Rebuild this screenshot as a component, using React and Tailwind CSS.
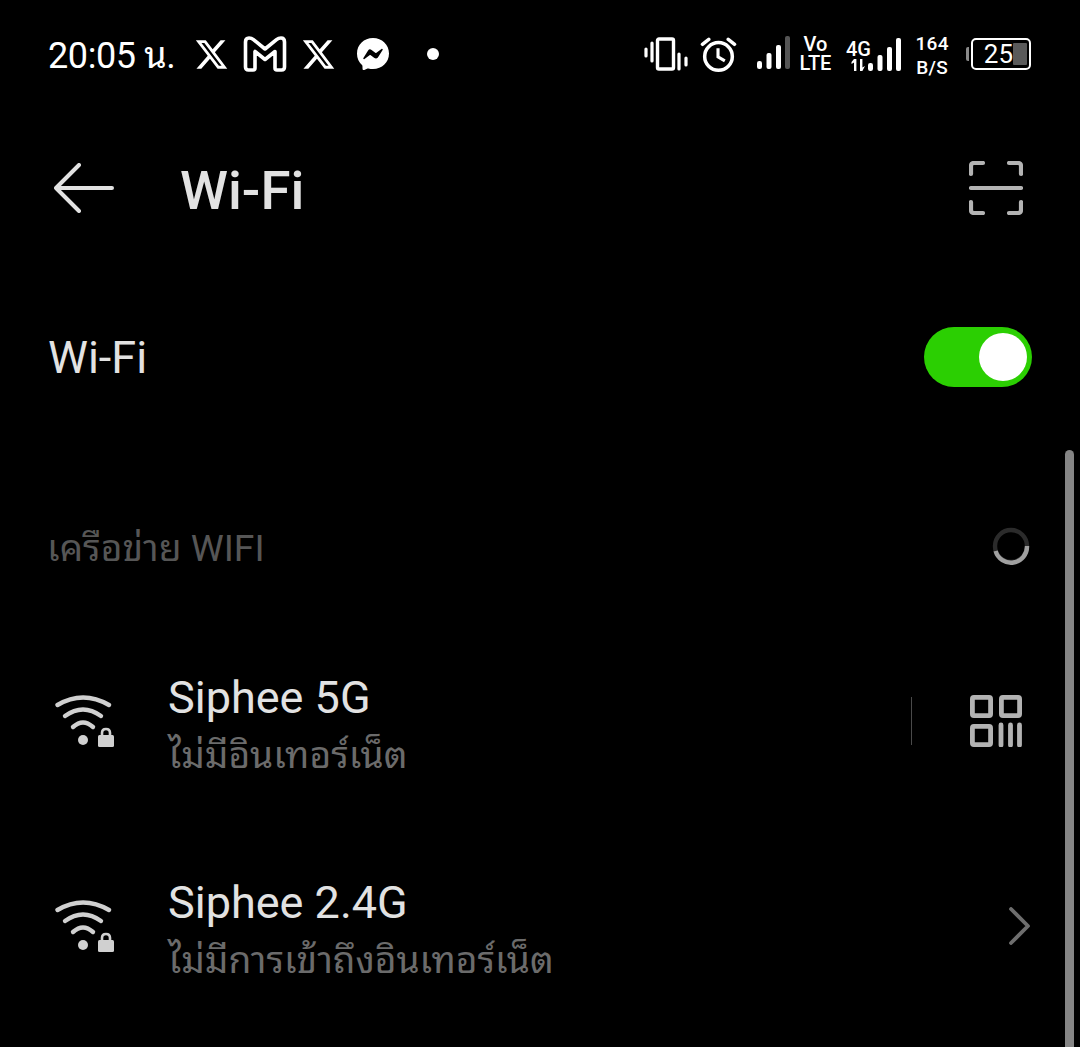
import React from "react";
import { SiMessenger } from "react-icons/si";

const sans = "font-['Roboto','Noto_Sans_Thai_Looped','Noto_Serif_Thai','Loma','Garuda','Noto_Sans_Thai','Noto_Sans','DejaVu_Sans',sans-serif]";

const XLogo = ({ className }) => (
  <svg viewBox="0 0 24 24" className={className} fill="currentColor">
    <path d="M18.244 2.25h3.308l-7.227 8.26 8.502 11.24H16.17l-5.214-6.817L4.99 21.75H1.68l7.73-8.835L1.254 2.25H8.08l4.713 6.231zm-1.161 17.52h1.833L7.084 4.126H5.117z" />
  </svg>
);

const MailMark = () => (
  <svg viewBox="0 0 46 36" className="w-[46px] h-[36px]" fill="none" stroke="white" strokeWidth="3.6" strokeLinejoin="round">
    <path d="M3.5 6 Q3.5 2 7 2 Q9.5 2 11.5 3.6 L23 13 L34.5 3.6 Q36.5 2 39 2 Q42.5 2 42.5 6 V31 Q42.5 34 39.5 34 H35 Q33 34 33 32 V15.5 L23 23.5 L13 15.5 V32 Q13 34 11 34 H6.5 Q3.5 34 3.5 31 Z" />
  </svg>
);

const VibrateIcon = () => (
  <svg viewBox="0 0 44 34" className="w-[44px] h-[34px]" fill="none" stroke="white">
    <rect x="13.5" y="2" width="16" height="30" rx="1.5" strokeWidth="3.4" />
    <path d="M2 12v7M8 6v18M35 17v15M42 21v7" strokeWidth="3.2" strokeLinecap="round" />
  </svg>
);

const AlarmIcon = () => (
  <svg viewBox="0 0 38 38" className="w-[37px] h-[37px]" fill="none" stroke="white" strokeWidth="3.6" strokeLinecap="round">
    <circle cx="19" cy="21" r="14.2" />
    <path d="M18.5 12.5v9l7 4" strokeWidth="3.2" strokeLinecap="butt" />
    <path d="M2.5 8.5 9 3.5M29 3.5l6.5 5" />
  </svg>
);

const SignalBars = ({ lastDim }) => (
  <svg viewBox="0 0 33 33" className="w-[33px] h-[33px]">
    <rect x="0" y="25" width="5" height="8" rx="2.2" fill="white" />
    <rect x="9.5" y="17" width="5" height="16" rx="2" fill="white" />
    <rect x="19" y="9" width="5" height="24" rx="2" fill="white" />
    <rect x="28" y="0" width="5" height="33" rx="2" fill={lastDim ? "#555555" : "white"} />
  </svg>
);

const ArrowsMini = () => (
  <svg viewBox="0 0 16 12" className="w-[16px] h-[12px]" fill="white">
    <path d="M4 0h2.4v12H4V3.5L1.5 5V3zM10 0h2.4v8.5L15 7 12.4 12H10z" />
  </svg>
);

const ScanIcon = () => (
  <svg viewBox="0 0 54 54" className="w-[54px] h-[54px]" fill="none" stroke="#b3b3b3" strokeWidth="4.2" strokeLinecap="round" strokeLinejoin="round">
    <path d="M2 13V5q0-3 3-3h9M40 2h9q3 0 3 3v8M2 41v8q0 3 3 3h9M40 52h9q3 0 3-3v-8" />
    <path d="M2 27h50" />
  </svg>
);

const QrIcon = () => (
  <svg viewBox="0 0 52 52" className="w-[52px] h-[52px]" fill="none" stroke="#b3b3b3" strokeWidth="4.8">
    <rect x="2.4" y="2.4" width="18.2" height="18.2" rx="1.5" />
    <rect x="31.4" y="2.4" width="18.2" height="18.2" rx="1.5" />
    <rect x="2.4" y="31.4" width="18.2" height="18.2" rx="1.5" />
    <path d="M31 30v20M40.5 30v20M49.5 30v20" strokeLinecap="round" />
  </svg>
);

const WifiLock = () => (
  <svg viewBox="0 0 60 56" className="w-[60px] h-[56px]" fill="none" stroke="#d0d0d0" strokeWidth="4.4" strokeLinecap="round">
    <path d="M2.5 12Q28-3 54 12" />
    <path d="M10 23Q28 10 46 23" />
    <path d="M18 34Q28 25 38 34" />
    <circle cx="28" cy="47" r="5" fill="#d0d0d0" stroke="none" />
    <path d="M48 42v-3q0-4 4-4t4 4v3" strokeWidth="2.6" stroke="#d0d0d0" transform="translate(-1 1)" />
    <rect x="43" y="42" width="16" height="12" rx="1.5" fill="#d0d0d0" stroke="none" />
  </svg>
);

const Spinner = () => (
  <svg viewBox="0 0 38 38" className="w-[38px] h-[38px]" fill="none" strokeWidth="4.4">
    <circle cx="19" cy="19" r="16" stroke="#2b2b2b" />
    <path d="M3.6 24A16 16 0 0 0 35 19" stroke="#a0a0a0" />
  </svg>
);

const Chevron = () => (
  <svg viewBox="0 0 24 38" className="w-[24px] h-[38px]" fill="none" stroke="#6e6e6e" strokeWidth="3.8" strokeLinecap="round" strokeLinejoin="round">
    <path d="M3 2l17 17L3 36" />
  </svg>
);

function NetworkRow({ name, status, action }) {
  return (
    <div className="h-[205px] flex items-center pt-[4px] pl-[55px] pr-[48px]">
      <WifiLock />
      <div className="ml-[53px] flex-1 pt-[12px]">
        <div className="text-[45px] leading-[56px] text-[#e2e2e2]">{name}</div>
        <div className="text-[37.2px] leading-[58px] text-[#6b6b6b]">{status}</div>
      </div>
      {action}
    </div>
  );
}

export default function App() {
  return (
    <div className={`relative h-[1047px] w-[1080px] overflow-hidden bg-black ${sans}`}>
      {/* status bar */}
      <div className="h-[108px] flex items-center pl-[48px] pr-[49px] text-white">
        <span className="text-[36px] leading-none tracking-[-0.4px] mt-[3px]">20:05 <span className="text-[36px]">น.</span></span>
        <XLogo className="w-[35px] h-[35px] ml-[19px]" />
        <span className="ml-[13px]"><MailMark /></span>
        <XLogo className="w-[35px] h-[35px] ml-[13px]" />
        <SiMessenger className="w-[32px] h-[32px] ml-[21px]" />
        <span className="w-[12px] h-[12px] rounded-full bg-white ml-[38px]" />
        <div className="flex-1" />
        <VibrateIcon />
        <span className="ml-[12px]"><AlarmIcon /></span>
        <span className="ml-[20px] mt-[-3px]"><SignalBars lastDim /></span>
        <div className="ml-[10px] flex flex-col items-center text-[20px] leading-[19px] font-medium">
          <span>Vo</span>
          <span>LTE</span>
        </div>
        <div className="ml-[14px] flex items-end">
          <div className="flex flex-col items-center w-[26px] -mr-[3px]">
            <span className="text-[20px] leading-[20px] font-medium">4G</span>
            <ArrowsMini />
          </div>
          <SignalBars />
        </div>
        <div className="ml-[14px] mt-[3px] flex flex-col items-center text-[19px] leading-[24px] font-medium tracking-[0.4px]">
          <span>164</span>
          <span>B/S</span>
        </div>
        <div className="ml-[17px] flex items-center">
          <span className="w-[3px] h-[14px] rounded-l-[2px] bg-[#8a8a8a] mr-[2px]" />
          <div className="w-[60px] h-[32px] rounded-[5px] border-[2px] border-white flex items-center justify-end relative pr-[2px]">
            <span className="text-[26px] leading-none mr-[14px]">25</span>
            <span className="absolute right-[2px] top-[3px] w-[14px] h-[22px] rounded-[1px] bg-[#5a5a5a]" />
          </div>
        </div>
      </div>

      {/* title bar */}
      <div className="h-[160px] flex items-center pl-[54px] pr-[57px]">
        <svg viewBox="0 0 60 50" className="w-[60px] h-[50px]" fill="none" stroke="#e2e2e2" strokeWidth="4" strokeLinecap="round" strokeLinejoin="round">
          <path d="M25 2 2 25l23 23M2 25h56" />
        </svg>
        <h1 className="ml-[66px] mt-[4px] flex-1 text-[54.5px] leading-none font-medium text-[#e2e2e2]">Wi-Fi</h1>
        <ScanIcon />
      </div>

      {/* main switch */}
      <div className="h-[178px] flex items-center justify-between pl-[48px] pr-[48px]">
        <span className="text-[45px] leading-none text-[#e2e2e2]">Wi-Fi</span>
        <div className="w-[108px] h-[60px] rounded-full bg-[#2bcf02] flex items-center justify-end pr-[5px]">
          <span className="w-[48px] h-[48px] rounded-full bg-white" />
        </div>
      </div>

      {/* networks */}
      <div className="h-[204px] pt-[60px] pl-[47px] pr-[50px] flex items-start justify-between">
        <span className="text-[37.2px] leading-[85px] text-[#565656]">เครือข่าย WIFI</span>
        <span className="mt-[21px]"><Spinner /></span>
      </div>
      <div className="-mt-[34px]">
        <NetworkRow
          name="Siphee 5G"
          status="ไม่มีอินเทอร์เน็ต"
          action={
            <div className="flex items-center">
              <span className="w-[1px] h-[48px] bg-[#4a4a4a] mr-[58px]" />
              <span className="mr-[10px]"><QrIcon /></span>
            </div>
          }
        />
        <NetworkRow
          name="Siphee 2.4G"
          status="ไม่มีการเข้าถึงอินเทอร์เน็ต"
          action={<Chevron />}
        />
      </div>

      {/* scroll thumb */}
      <div className="absolute right-[6px] top-[450px] bottom-0 w-[9px] rounded-t-[5px] bg-[#858585]" />
    </div>
  );
}
